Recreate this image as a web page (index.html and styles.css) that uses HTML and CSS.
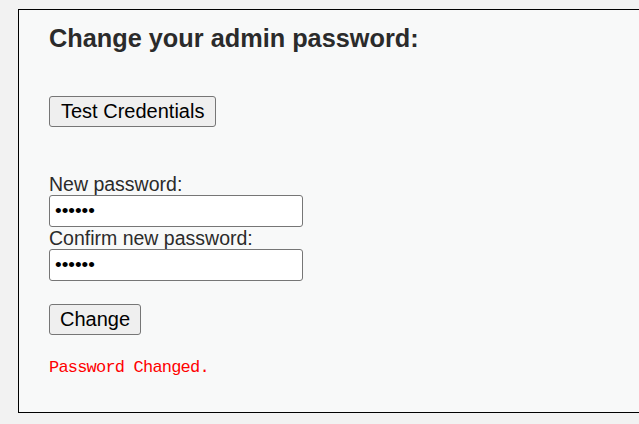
FILE: index.html
```html
<!DOCTYPE html>
<html lang="en">
<head>
<meta charset="utf-8">
<title>Change admin password</title>
<link rel="stylesheet" href="styles.css">
</head>
<body>
<div class="panel">
  <h2 class="title">Change your admin password:</h2>
  <button class="btn btn-test" type="button">Test Credentials</button>
  <form class="form">
    <label class="label" for="pw1">New password:</label>
    <input class="field" id="pw1" type="password" value="123456">
    <label class="label" for="pw2">Confirm new password:</label>
    <input class="field" id="pw2" type="password" value="123456">
    <button class="btn btn-change" type="button">Change</button>
  </form>
  <p class="status">Password Changed.</p>
</div>
</body>
</html>
```
FILE: styles.css
```css
html {
  overflow: hidden;
}
body {
  margin: 0;
  padding: 9px 0 0 18px;
  background: #f2f2f2;
  font-family: "Liberation Sans", Arial, sans-serif;
}
.panel {
  width: 700px;
  border: 1px solid #000;
  background: #f8f9f9;
  padding: 0 30px 35px 30px;
}
.title {
  margin: 13px 0 0 0;
  font-size: 25.3px;
  line-height: 30px;
  font-weight: bold;
  color: #2b2b2b;
}
.btn {
  display: block;
  font-family: "Liberation Sans", Arial, sans-serif;
  font-size: 20px;
  line-height: 23px;
  padding: 3px 11px;
  border: 1px solid #767676;
  border-radius: 3px;
  background: #efefef;
  color: #000;
}
.btn-test {
  margin-top: 43px;
}
.form {
  display: flex;
  flex-direction: column;
  align-items: flex-start;
  margin-top: 46px;
}
.label {
  font-size: 19.5px;
  line-height: 22px;
  color: #2b2b2b;
}
.field {
  box-sizing: border-box;
  width: 254px;
  height: 32px;
  margin: 0;
  padding: 0 5px;
  border: 1px solid #767676;
  border-radius: 3px;
  background: #fff;
  font-family: "Liberation Sans", Arial, sans-serif;
  font-size: 19px;
  color: #000;
}
.btn-change {
  margin-top: 23px;
  padding: 3px 10px;
}
.status {
  margin: 24px 0 0 0;
  font-family: "Liberation Mono", "Courier New", monospace;
  font-size: 17px;
  letter-spacing: -0.8px;
  line-height: 18px;
  color: #ff0000;
}
```
